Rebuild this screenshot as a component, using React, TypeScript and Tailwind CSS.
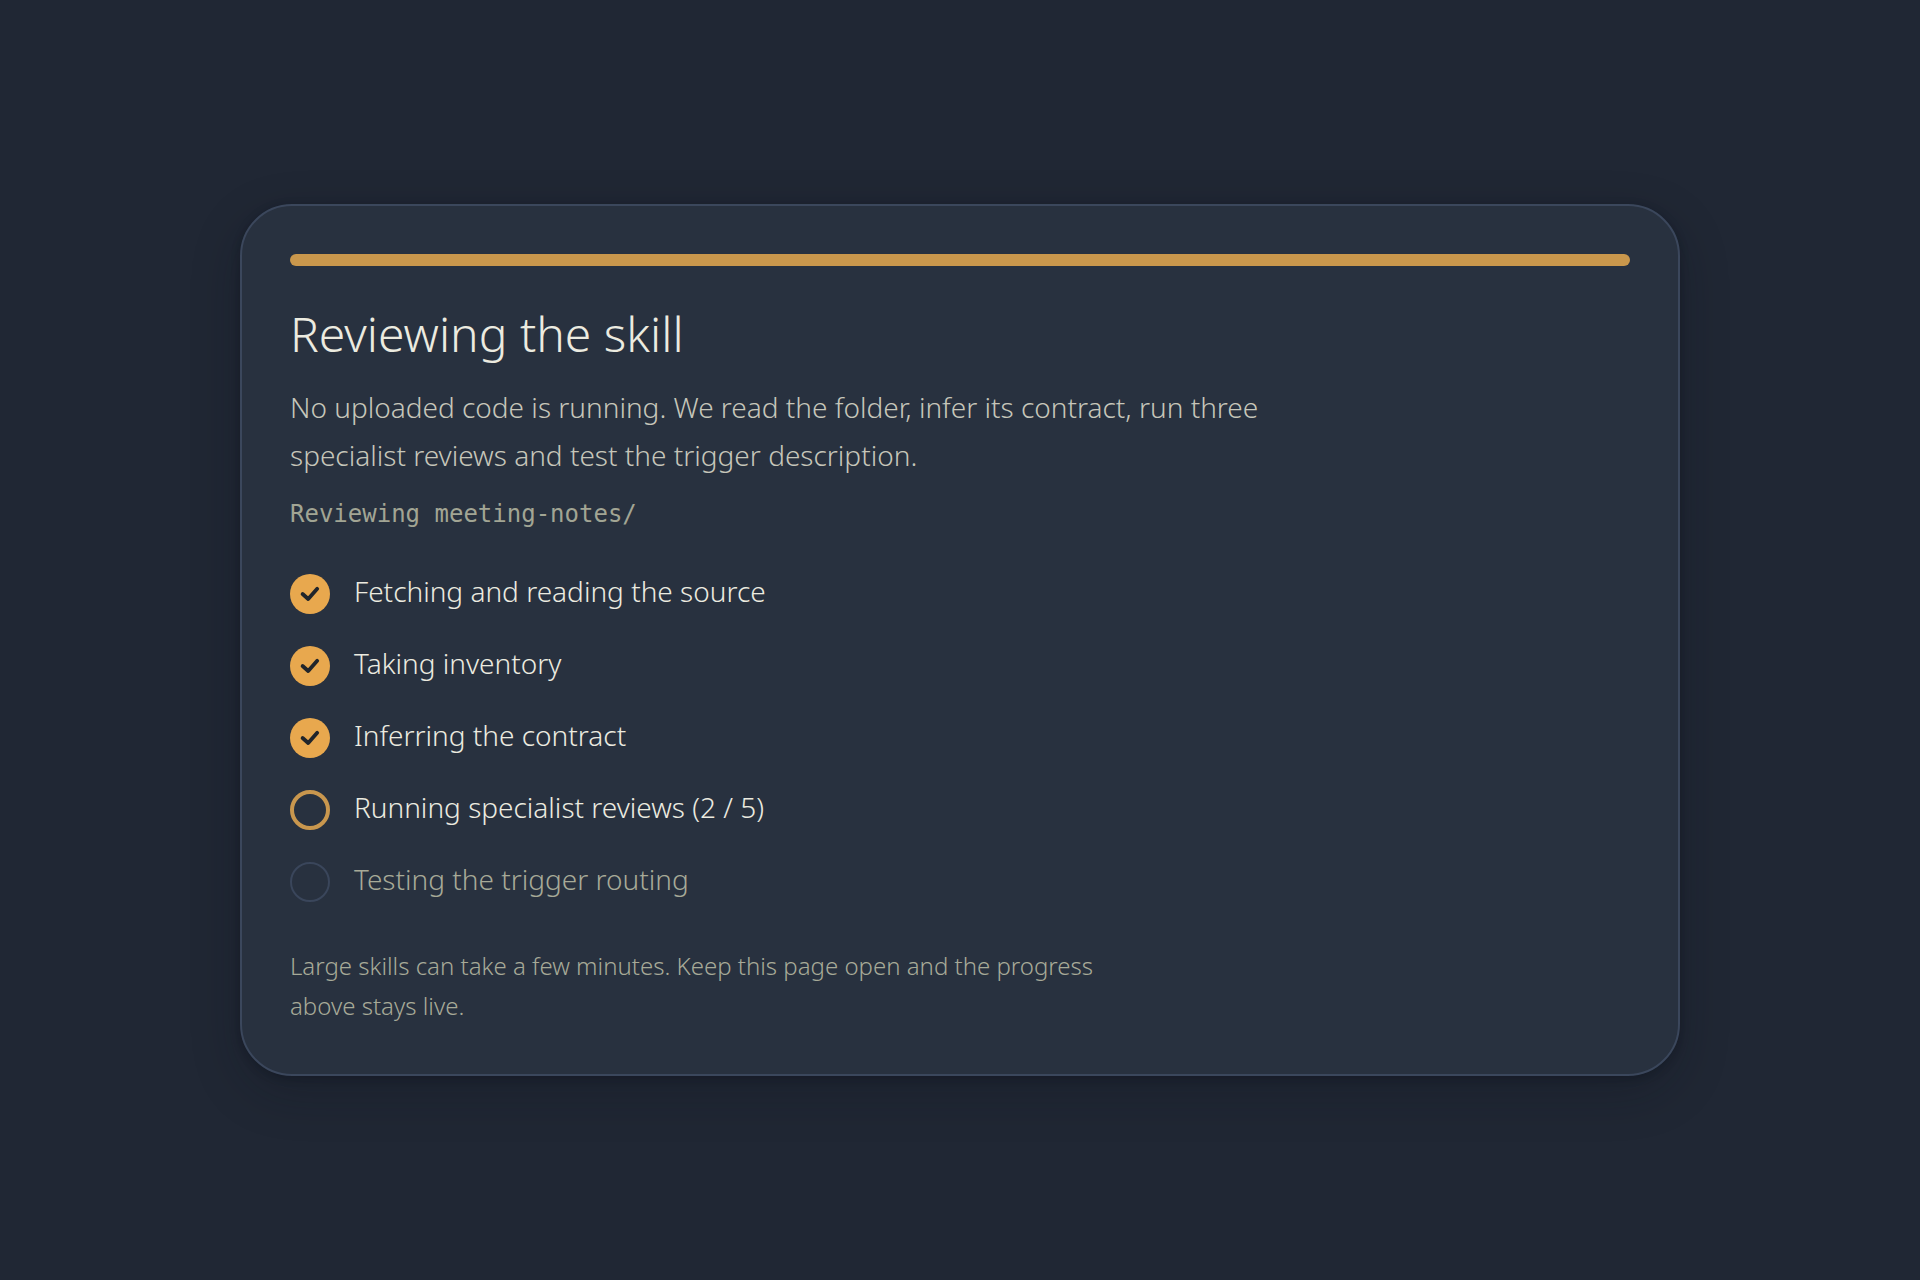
type Status = "done" | "active" | "pending";

const steps: { label: string; status: Status }[] = [
  { label: "Fetching and reading the source", status: "done" },
  { label: "Taking inventory", status: "done" },
  { label: "Inferring the contract", status: "done" },
  { label: "Running specialist reviews (2 / 5)", status: "active" },
  { label: "Testing the trigger routing", status: "pending" },
];

function StepIcon({ status }: { status: Status }) {
  if (status === "done") {
    return (
      <span className="size-10 shrink-0 rounded-full bg-[#e8a84e]">
        <svg viewBox="0 0 40 40" fill="none" className="size-10" aria-hidden="true">
          <path d="M12.6 20L18.2 25L27.2 14.8" stroke="#20252b" strokeWidth="3.8" strokeLinecap="round" strokeLinejoin="round" />
        </svg>
      </span>
    );
  }
  if (status === "active") {
    return <span className="size-10 shrink-0 rounded-full border-4 border-[#c9974e]" />;
  }
  return <span className="size-10 shrink-0 rounded-full border-2 border-[#3a465b]" />;
}

export default function App() {
  return (
    <main className="min-h-screen flex items-center justify-center bg-[#202734] px-6 py-12 font-['Noto_Sans',sans-serif] font-light">
      <section className="w-full max-w-[1440px] rounded-[52px] border-2 border-[#3b475c] bg-[#28313f] p-12 shadow-[0_2px_8px_rgba(10,14,22,0.3),0_16px_48px_rgba(10,14,22,0.25)]">
        {/* Progress */}
        <div role="progressbar" aria-label="Review progress" className="h-3 rounded-full bg-[#c9974c]" />

        {/* Heading */}
        <h1 className="mt-10 text-5xl leading-14 text-[#ecebe0]">Reviewing the skill</h1>
        <p className="mt-[21px] max-w-[1040px] text-[28px] leading-12 text-[#c6c6ba]">
          No uploaded code is running. We read the folder, infer its contract, run three specialist reviews and test the trigger description.
        </p>
        <p className="mt-[15px] font-['DejaVu_Sans_Mono',monospace] text-2xl leading-10 font-normal text-[#a2a594]">
          Reviewing meeting-notes/
        </p>

        {/* Steps */}
        <ol className="mt-10 flex flex-col gap-8">
          {steps.map((s) => (
            <li key={s.label} className="flex items-start gap-6">
              <StepIcon status={s.status} />
              <span className={`text-[28px] leading-[34px] ${s.status === "pending" ? "text-[#a7aa98]" : "text-[#ecebe0]"}`}>
                {s.label}
              </span>
            </li>
          ))}
        </ol>

        <p className="mt-11 max-w-[840px] text-2xl leading-10 text-[#a7aa98]">
          Large skills can take a few minutes. Keep this page open and the progress above stays live.
        </p>
      </section>
    </main>
  );
}
